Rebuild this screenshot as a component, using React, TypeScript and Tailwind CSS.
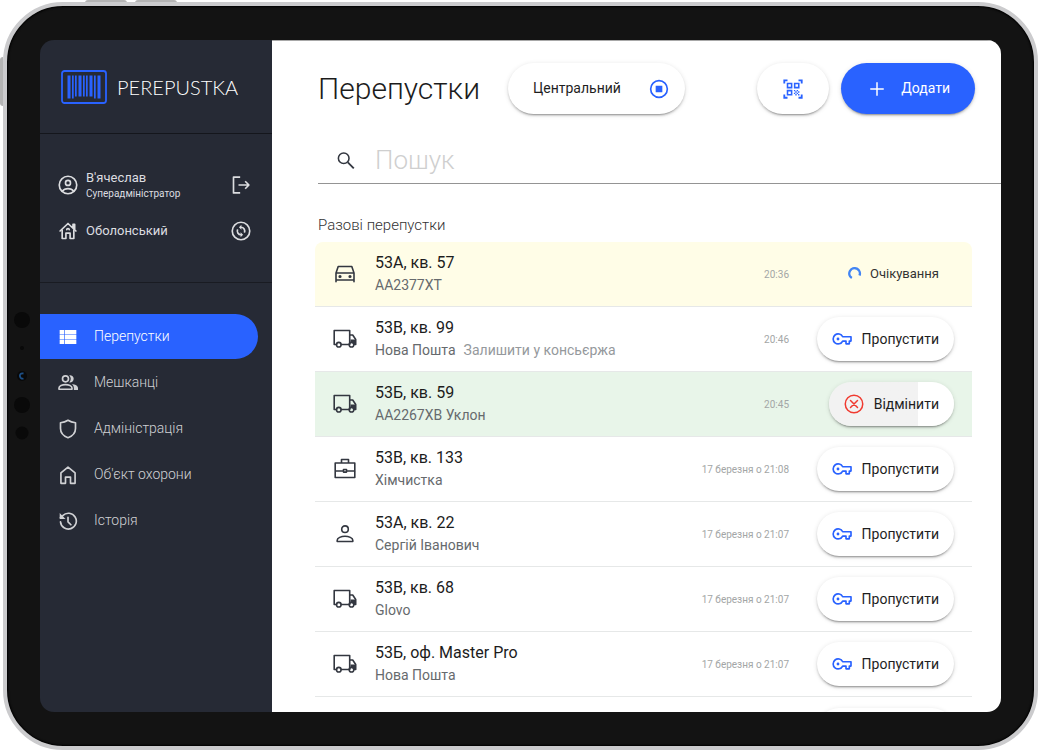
import React from 'react';
import clsx from 'clsx';

type IconProps = { className?: string };

const Svg = ({ className, children }: IconProps & { children: React.ReactNode }) => (
  <svg
    viewBox="0 0 24 24"
    className={clsx('shrink-0', className)}
    fill="none"
    stroke="currentColor"
    strokeWidth={2}
    strokeLinecap="round"
    strokeLinejoin="round"
    aria-hidden="true"
  >
    {children}
  </svg>
);

const UserIcon = ({ className }: IconProps) => (
  <Svg className={className}>
    <circle cx="12" cy="12" r="10.500" />
    <circle cx="12" cy="9.500" r="3" />
    <path d="M5 19.500C7 17 9.600 16.300 12 16.300s5 .7 7 3.200" />
  </Svg>
);

const LogoutIcon = ({ className }: IconProps) => (
  <Svg className={className}>
    <path d="M11 2.500H3v19h8M9 12h12.500M17 7.500l4.500 4.500-4.500 4.500" strokeLinecap="butt" />
  </Svg>
);

const EstateIcon = ({ className }: IconProps) => (
  <Svg className={className}>
    <path d="M2.500 12 12 3l9.500 9M18 8V4h2v6" />
    <path d="M5 11v10h4.500v-6.500h5V21H19V11M10.500 10.500a1.500 1.500 0 0 1 3 0" />
  </Svg>
);

const SyncIcon = ({ className }: IconProps) => (
  <Svg className={className}>
    <circle cx="12" cy="12" r="10.500" />
    <path d="M12 7.500a4.500 4.500 0 0 1 4 6.500M12 16.500A4.500 4.500 0 0 1 8 10" strokeLinecap="butt" />
    <path d="M12.500 4.500v6l-3-3zM11.500 19.500v-6l3 3z" fill="currentColor" stroke="none" />
  </Svg>
);

const ListIcon = ({ className }: IconProps) => (
  <Svg className={className}>
    <path
      fill="currentColor"
      stroke="none"
      d="M8 3.500v5.200h14V3.500zM8 20.500h14v-5.200H8zM8 14.600h14V9.400H8zM2 8.700h5.200V3.500H2zM2 20.500h5.200v-5.200H2zM2 14.600h5.200V9.400H2z"
    />
  </Svg>
);

const PeopleIcon = ({ className }: IconProps) => (
  <Svg className={className}>
    <circle cx="9" cy="7" r="3.600" />
    <path d="M1.200 19.500v-1.500c0-2.500 4-4 7.800-4s7.800 1.500 7.800 4v1.500z" />
    <path
      fill="currentColor"
      stroke="none"
      d="M13.500 11.300a6 6 0 0 0 0-8.600 4.400 4.400 0 1 1 0 8.600zM16.500 13.200c4 .4 7.500 2.200 7.500 4.800v2.500h-5V18c0-2-1-3.600-2.500-4.800z"
    />
  </Svg>
);

const ShieldIcon = ({ className }: IconProps) => (
  <Svg className={className}>
    <path d="M12 1.500c2.600 1.800 5.600 2.700 9 3v7c0 5-3.500 9-9 11-5.500-2-9-6-9-11v-7c3.400-.3 6.400-1.200 9-3z" />
  </Svg>
);

const HomeIcon = ({ className }: IconProps) => (
  <Svg className={className}>
    <path d="M3.500 9.500 12 2.500l8.500 7V22H15v-7.500H9V22H3.500z" />
  </Svg>
);

const HistoryIcon = ({ className }: IconProps) => (
  <Svg className={className}>
    <path d="M3 13a9.500 9.500 0 1 0 2.700-7.500L3 8M12 7.500V13l3.500 3.500" />
    <path d="M2 2.500v7h7z" fill="currentColor" stroke="none" />
  </Svg>
);

const SearchIcon = ({ className }: IconProps) => (
  <Svg className={className}>
    <circle cx="9.500" cy="9" r="5.800" strokeWidth={1.700} />
    <path d="m14 13.500 6.500 6.500" strokeLinecap="butt" />
  </Svg>
);

const StopIcon = ({ className }: IconProps) => (
  <Svg className={className}>
    <circle cx="12" cy="12" r="10" />
    <path d="M8 8h8v8H8z" fill="currentColor" stroke="none" />
  </Svg>
);

const QrIcon = ({ className }: IconProps) => (
  <Svg className={className}>
    <g strokeLinecap="butt" strokeLinejoin="miter">
      <path d="M2.500 6V2.500H6M18 2.500h3.500V6M21.500 18v3.500H18M6 21.500H2.500V18" />
      <path d="M6 6h4.500v4.500H6zM13.800 6h4.500v4.500h-4.500zM6 13.800h4.500v4.500H6z" strokeWidth={1.700} />
    </g>
    <path
      fill="currentColor"
      stroke="none"
      d="M13 13h1.500v1.500H13zM14.500 14.500h1.500v1.500h-1.500zM16 13h1.500v1.500H16zM17.500 14.500H19v1.500h-1.500zM13 16h1.500v1.500H13zM16 16h1.500v1.500H16zM14.500 17.500h1.500V19h-1.500zM17.500 17.500H19V19h-1.500z"
    />
  </Svg>
);

const PlusIcon = ({ className }: IconProps) => (
  <Svg className={className}>
    <path d="M12 3v18M3 12h18" strokeLinecap="butt" />
  </Svg>
);

const CarIcon = ({ className }: IconProps) => (
  <Svg className={className}>
    <g strokeWidth={1.600}>
      <path d="M3 11 5.200 4.500h13.600L21 11v8.800M3 11v8.800M3 11h18M3 18h18" />
      <circle cx="7" cy="14.500" r=".8" fill="currentColor" />
      <circle cx="17" cy="14.500" r=".8" fill="currentColor" />
    </g>
  </Svg>
);

const TruckIcon = ({ className }: IconProps) => (
  <Svg className={className}>
    <g strokeWidth={1.600}>
      <path d="M3.500 17.500H1.200v-14h15.500v14H8.300M16.700 8h3l3 4.500v5h-1.500" />
      <circle cx="5.800" cy="17.700" r="2.300" />
      <circle cx="18.500" cy="17.700" r="2.300" />
    </g>
    <path d="M17.500 12.500h5.500v4.500h-2l-1.500-1.500h-2z" fill="currentColor" stroke="none" />
  </Svg>
);

const CaseIcon = ({ className }: IconProps) => (
  <Svg className={className}>
    <g strokeWidth={1.600}>
      <path d="M2.200 6h19.600v14.500H2.200zM8.500 5.500V2.500h7v3M2.200 14h8M14 14h8" />
      <path d="M10.500 12.500h3v2.600h-3z" />
    </g>
  </Svg>
);

const PersonIcon = ({ className }: IconProps) => (
  <Svg className={className}>
    <g strokeWidth={1.600}>
      <circle cx="12" cy="7.200" r="3.300" />
      <path d="M4.200 19.500v-1.300c0-2.300 4-3.900 7.800-3.900s7.800 1.600 7.800 3.900v1.300z" />
    </g>
  </Svg>
);

const KeyIcon = ({ className }: IconProps) => (
  <Svg className={className}>
    <path d="M12.800 9.300h10v5.200h-2v3.300h-4v-3.300h-4A6 6 0 1 1 12.800 9.300z" />
    <circle cx="7.200" cy="12" r="1.700" fill="currentColor" stroke="none" />
  </Svg>
);

const CancelIcon = ({ className }: IconProps) => (
  <Svg className={className}>
    <circle cx="12" cy="12" r="10.500" strokeWidth={1.800} />
    <path d="m7.800 7.800 8.400 8.400M16.200 7.800l-8.400 8.400" strokeWidth={1.800} />
  </Svg>
);

const LogoMark = () => (
  <svg viewBox="0 0 46 34" className="h-[34px] w-[46px] shrink-0 text-[#2962ff]" fill="currentColor" aria-hidden="true">
    <rect x="1" y="1" width="44" height="32" rx="2.500" fill="none" stroke="currentColor" strokeWidth="1.800" />
    <path d="M6.500 5.500h3v23h-3zM11 5.500h1.700v23H11zM14 5.500h1.700v21H14zM17.500 5.500h3v21h-3zM22 5.500h1.700v21H22zM25 5.500h1.700v21H25zM28.500 5.500h3v21h-3zM33 5.500h1.700v23H33zM36.500 5.500h3v23h-3z" />
  </svg>
);

const navItems = [
  { label: 'Перепустки', icon: ListIcon, active: true },
  { label: 'Мешканці', icon: PeopleIcon },
  { label: 'Адміністрація', icon: ShieldIcon },
  { label: "Об'єкт охорони", icon: HomeIcon },
  { label: 'Історія', icon: HistoryIcon },
];

type Pass = {
  title: string;
  text: string;
  note?: string;
  time: string;
  icon: React.ComponentType<IconProps>;
  status: 'new' | 'waiting' | 'passed';
};

const passes: Pass[] = [
  { title: '53А, кв. 57', text: 'АА2377ХТ', time: '20:36', icon: CarIcon, status: 'waiting' },
  { title: '53В, кв. 99', text: 'Нова Пошта', note: 'Залишити у консьєржа', time: '20:46', icon: TruckIcon, status: 'new' },
  { title: '53Б, кв. 59', text: 'АА2267ХВ Уклон', time: '20:45', icon: TruckIcon, status: 'passed' },
  { title: '53В, кв. 133', text: 'Хімчистка', time: '17 березня о 21:08', icon: CaseIcon, status: 'new' },
  { title: '53А, кв. 22', text: 'Сергій Іванович', time: '17 березня о 21:07', icon: PersonIcon, status: 'new' },
  { title: '53В, кв. 68', text: 'Glovo', time: '17 березня о 21:07', icon: TruckIcon, status: 'new' },
  { title: '53Б, оф. Master Pro', text: 'Нова Пошта', time: '17 березня о 21:07', icon: TruckIcon, status: 'new' },
];

const raised = 'shadow-[0_3px_1px_-2px_rgba(0,0,0,0.2),0_2px_2px_rgba(0,0,0,0.14),0_1px_5px_rgba(0,0,0,0.12)]';

const PassAction = ({ status }: { status: Pass['status'] }) => {
  if (status === 'waiting') {
    return (
      <span className="flex items-center gap-2 px-[15px] text-[13px] text-[#333]">
        <svg viewBox="0 0 14 14" className="h-[14px] w-[14px] text-[#4285f4]" aria-hidden="true">
          <path d="M3.800 11A5.300 5.300 0 1 1 11.500 8.500" fill="none" stroke="currentColor" strokeWidth="2.400" />
        </svg>
        Очікування
      </span>
    );
  }
  if (status === 'passed') {
    return (
      <button
        type="button"
        className={clsx('flex h-11 items-center gap-[10px] rounded-full bg-linear-to-r from-[#f2f2f2] from-71% to-white to-71% px-[15px] text-[14px] text-[#1e1e1e]', raised)}
      >
        <CancelIcon className="h-5 w-5 text-[#f03a30]" />
        Відмінити
      </button>
    );
  }
  return (
    <button
      type="button"
      className={clsx('flex h-11 items-center gap-[10px] rounded-full bg-white px-[15px] text-[14px] text-[#1e1e1e]', raised)}
    >
      <KeyIcon className="h-5 w-5 text-[#2962ff]" />
      Пропустити
    </button>
  );
};

const PassRow = ({ pass }: { pass: Pass }) => {
  const Icon = pass.icon;
  return (
    <li
      className={clsx(
        'flex h-[65px] items-center border-b border-[#e6e8e8]',
        pass.status === 'waiting' && 'rounded-t-lg bg-[#fffde7]',
        pass.status === 'passed' && 'bg-[#e8f5e9]'
      )}
    >
      <div className="flex w-[60px] shrink-0 justify-center text-[#333740]">
        <Icon className="h-6 w-6" />
      </div>
      <div className="min-w-0 flex-1 pb-0.5">
        <p className="text-[16px] leading-[23px] text-[#1c1c1c]">{pass.title}</p>
        <p className="flex gap-2 text-[14px] leading-[22px] text-[#666a6d]">
          <span>{pass.text}</span>
          {pass.note && <span className="text-[#95999c]">{pass.note}</span>}
        </p>
      </div>
      <time className="text-[10px] text-[#a3a6a6]">{pass.time}</time>
      <div className="flex w-[183px] shrink-0 justify-end pr-[18px]">
        <PassAction status={pass.status} />
      </div>
    </li>
  );
};

const Sidebar = () => (
  <aside className="flex w-[232px] shrink-0 flex-col bg-[#262a35] text-[#dcdde0]">
    <div className="flex h-[94px] items-center gap-[10px] border-b border-[#14161c] pl-[21px]">
      <LogoMark />
      <span className="text-[20px] font-light text-white [font-family:Lato,sans-serif]">PEREPUSTKA</span>
    </div>

    <div className="flex h-[149px] flex-col gap-5 border-b border-[#191b22] pt-[35px] pr-[21px] pl-[18px]">
      <div className="flex items-center">
        <UserIcon className="h-5 w-5" />
        <div className="ml-2 flex-1">
          <p className="text-[13px] leading-[18px]">В'ячеслав</p>
          <p className="text-[10px] leading-[14px]">Суперадміністратор</p>
        </div>
        <button type="button" aria-label="Вийти">
          <LogoutIcon className="h-5 w-5" />
        </button>
      </div>
      <div className="flex items-center">
        <EstateIcon className="h-5 w-5" />
        <p className="ml-2 flex-1 text-[13px]">Оболонський</p>
        <button type="button" aria-label="Змінити об'єкт">
          <SyncIcon className="h-5 w-5" />
        </button>
      </div>
    </div>

    <nav className="mt-[31px] flex flex-col gap-px">
      {navItems.map(({ label, icon: Icon, active }) => (
        <a
          key={label}
          href="#"
          className={clsx(
            'mr-[14px] flex h-[45px] items-center gap-4 rounded-r-full pl-[18px] text-[14px] font-light',
            active ? 'bg-[#2962ff] text-white' : 'text-[#d0d1d4]'
          )}
        >
          <Icon className="h-5 w-5" />
          {label}
        </a>
      ))}
    </nav>
  </aside>
);

const Main = () => (
  <main className="flex min-w-0 flex-1 flex-col overflow-hidden border-t border-[#a8a8a8] bg-white">
    <header className="mt-[22px] flex h-[51px] shrink-0 items-center pr-[26px] pl-[46px]">
      <h1 className="text-[30px] font-light text-[#1c1c1c]">Перепустки</h1>
      <button
        type="button"
        className={clsx('ml-7 flex h-[51px] w-[177px] items-center justify-between rounded-full bg-white pr-4 pl-[25px] text-[14px] text-[#1e1e1e]', raised)}
      >
        Центральний
        <StopIcon className="h-5 w-5 text-[#2962ff]" />
      </button>
      <button
        type="button"
        aria-label="Сканувати QR-код"
        className={clsx('ml-auto flex h-[51px] w-[72px] items-center justify-center rounded-full bg-white', raised)}
      >
        <QrIcon className="h-[22px] w-[22px] text-[#2962ff]" />
      </button>
      <button
        type="button"
        className={clsx('ml-3 flex h-[51px] w-[134px] items-center justify-between rounded-full bg-[#2962ff] pr-[25px] pl-[27px] text-[14px] text-white', raised)}
      >
        <PlusIcon className="h-[18px] w-[18px]" />
        Додати
      </button>
    </header>

    <label className="mt-6 ml-[46px] flex h-[46px] shrink-0 items-center gap-[18px] border-b border-[#949494] pl-[17px]">
      <SearchIcon className="h-[22px] w-[22px] text-[#333740]" />
      <input
        type="search"
        aria-label="Пошук"
        placeholder="Пошук"
        className="min-w-0 flex-1 bg-transparent text-[26px] font-light outline-none placeholder:text-[#cfcfcf]"
      />
    </label>

    <h2 className="mt-[29px] ml-[46px] text-[15px] leading-6 font-light text-[#333]">Разові перепустки</h2>
    <ul className="mt-[5px] mr-[29px] ml-[43px]">
      {passes.map((pass) => (
        <PassRow key={pass.title} pass={pass} />
      ))}
      {/* next row peeks in from below */}
      <li className="flex h-[65px] items-center justify-end pr-[18px]" aria-hidden="true">
        <div className={clsx('h-11 w-[137px] rounded-full bg-white', raised)} />
      </li>
    </ul>
  </main>
);

const App = () => (
  <div className="relative h-screen overflow-hidden bg-white pt-[2px] pr-px pl-[3px] [font-family:Roboto,sans-serif]">
    {/* side buttons of the tablet */}
    <div className="absolute top-0 left-[85px] h-[3px] w-[42px] rounded-t-sm bg-[#b4b4b4]" />
    <div className="absolute top-0 left-[135px] h-[3px] w-[42px] rounded-t-sm bg-[#b4b4b4]" />
    <div className="absolute top-[57px] left-0 h-[49px] w-[3px] rounded-l-sm bg-[#b4b4b4]" />

    <div className="relative flex h-full rounded-[60px] border-4 border-[#cbcbcd] bg-[#131313] pt-[34px] pr-[33px] pb-[34px] pl-[33px] shadow-[inset_0_0_2px_1px_#000]">
      <svg viewBox="0 0 20 136" className="absolute top-[300px] left-1 h-[136px] w-5" aria-hidden="true">
        <g fill="#090909">
          <circle cx="11" cy="14" r="8" />
          <circle cx="11" cy="42" r="2" />
          <circle cx="11" cy="70" r="5" />
          <circle cx="11" cy="99" r="8" />
          <circle cx="11" cy="127" r="6.500" />
        </g>
        <path d="M12.500 67.500c-3-.5-4 1-3.500 3s2 2.500 3.500 2" fill="none" stroke="#1d4f86" strokeWidth="1.800" />
      </svg>
      <div className="flex min-w-0 flex-1 overflow-hidden rounded-[14px]">
        <Sidebar />
        <Main />
      </div>
    </div>
  </div>
);

export default App;
